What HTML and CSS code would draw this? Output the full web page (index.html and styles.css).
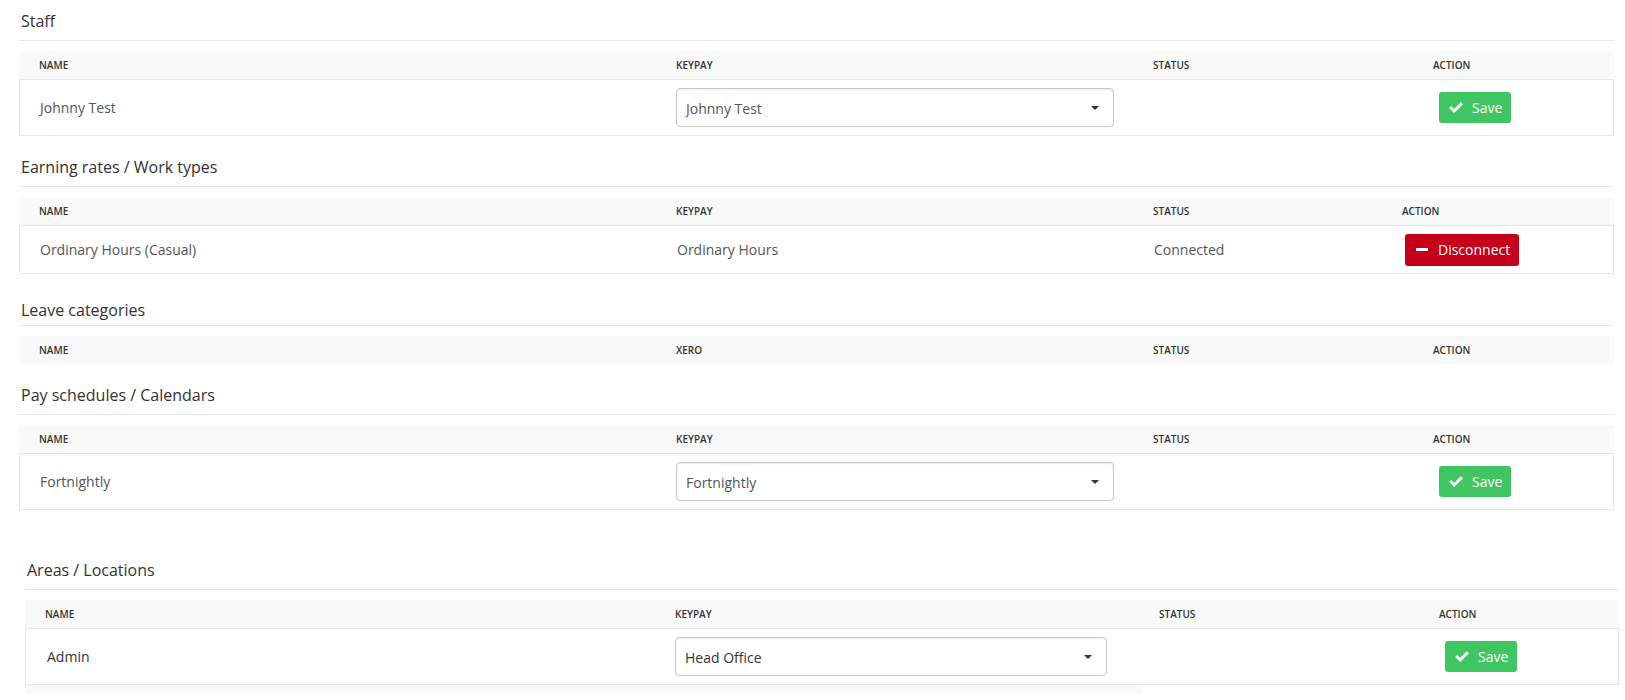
FILE: index.html
```html
<!DOCTYPE html>
<html lang="en">
<head>
<meta charset="UTF-8">
<meta name="viewport" content="width=device-width, initial-scale=1.0">
<title>KeyPay Mapping</title>
<link rel="stylesheet" href="styles.css">
</head>
<body>

<div class="section">
    <h2 class="section-title">Staff</h2>
    <div class="map-table">
        <div class="map-head">
            <div class="cell">NAME</div>
            <div class="cell">KEYPAY</div>
            <div class="cell">STATUS</div>
            <div class="cell">ACTION</div>
        </div>
        <div class="map-row">
            <div class="cell">Johnny Test</div>
            <div class="cell">
                <div class="select-wrap">
                    <select class="select"><option>Johnny Test</option></select>
                </div>
            </div>
            <div class="cell"></div>
            <div class="cell">
                <button class="btn btn-save">
                    <svg class="icon-check" viewBox="0 0 15 12"><polygon points="0,6.6 2.3,4.3 5.5,7.5 12.7,0.3 15,2.6 5.5,12"/></svg>
                    Save
                </button>
            </div>
        </div>
    </div>
</div>

<div class="section">
    <h2 class="section-title">Earning rates / Work types</h2>
    <div class="map-table map-table-rates">
        <div class="map-head">
            <div class="cell">NAME</div>
            <div class="cell">KEYPAY</div>
            <div class="cell">STATUS</div>
            <div class="cell">ACTION</div>
        </div>
        <div class="map-row map-row-short">
            <div class="cell">Ordinary Hours (Casual)</div>
            <div class="cell">Ordinary Hours</div>
            <div class="cell">Connected</div>
            <div class="cell">
                <button class="btn btn-disconnect">
                    <span class="icon-minus"></span>
                    Disconnect
                </button>
            </div>
        </div>
    </div>
</div>

<div class="section section-leave">
    <h2 class="section-title">Leave categories</h2>
    <div class="map-table">
        <div class="map-head">
            <div class="cell">NAME</div>
            <div class="cell">XERO</div>
            <div class="cell">STATUS</div>
            <div class="cell">ACTION</div>
        </div>
    </div>
</div>

<div class="section section-pay">
    <h2 class="section-title">Pay schedules / Calendars</h2>
    <div class="map-table">
        <div class="map-head">
            <div class="cell">NAME</div>
            <div class="cell">KEYPAY</div>
            <div class="cell">STATUS</div>
            <div class="cell">ACTION</div>
        </div>
        <div class="map-row">
            <div class="cell">Fortnightly</div>
            <div class="cell">
                <div class="select-wrap">
                    <select class="select"><option>Fortnightly</option></select>
                </div>
            </div>
            <div class="cell"></div>
            <div class="cell">
                <button class="btn btn-save">
                    <svg class="icon-check" viewBox="0 0 15 12"><polygon points="0,6.6 2.3,4.3 5.5,7.5 12.7,0.3 15,2.6 5.5,12"/></svg>
                    Save
                </button>
            </div>
        </div>
    </div>
</div>

<div class="section section-areas">
    <h2 class="section-title">Areas / Locations</h2>
    <div class="map-table map-table-areas">
        <div class="map-head">
            <div class="cell">NAME</div>
            <div class="cell">KEYPAY</div>
            <div class="cell">STATUS</div>
            <div class="cell">ACTION</div>
        </div>
        <div class="map-row">
            <div class="cell">Admin</div>
            <div class="cell">
                <div class="select-wrap">
                    <select class="select"><option>Head Office</option></select>
                </div>
            </div>
            <div class="cell"></div>
            <div class="cell">
                <button class="btn btn-save">
                    <svg class="icon-check" viewBox="0 0 15 12"><polygon points="0,6.6 2.3,4.3 5.5,7.5 12.7,0.3 15,2.6 5.5,12"/></svg>
                    Save
                </button>
            </div>
        </div>
        <div class="map-foot"></div>
    </div>
</div>

</body>
</html>
```

FILE: styles.css
```css
/* Mapping page */
body {
    margin: 0;
    padding-top: 9px;
    font-family: "Open Sans", "Noto Sans", sans-serif;
    background-color: #fff;
    color: #555;
}
.section {
    margin: 19px 11px 0 19px;
}
.section:first-child {
    margin-top: 0;
}
.section-leave {
    margin-top: 24px;
}
.section-pay {
    margin-top: 19px;
}
.section-areas {
    margin: 48px 6px 0 25px;
}
.section-title {
    margin: 0;
    padding: 0 2px 7px;
    font-size: 16px;
    font-weight: 400;
    line-height: 24px;
    color: #333;
    border-bottom: 1px solid #e8e8e8;
}
.section-leave .section-title {
    padding-bottom: 3px;
}
.map-table {
    margin-top: 10px;
}
.map-head,
.map-row {
    display: grid;
    grid-template-columns: 639px 477px 280px 1fr;
    align-items: center;
}
.map-table-rates .map-head,
.map-table-rates .map-row {
    grid-template-columns: 639px 477px 249px 1fr;
}
.map-table-areas .map-head,
.map-table-areas .map-row {
    grid-template-columns: 630px 484px 280px 1fr;
}
.map-head {
    height: 28px;
    background-color: #f9f9f9;
    font-size: 10px;
    font-weight: 600;
    color: #333;
}
.map-row {
    height: 55px;
    border: 1px solid #e6e6e6;
    font-size: 14px;
}
.map-row-short {
    height: 47px;
}
.cell {
    padding-left: 18px;
}
.cell:first-child {
    padding-left: 20px;
}
.map-table-areas .cell {
    padding-left: 20px;
}
.map-table-areas .map-row {
    color: #333;
}
.map-table-areas .map-row .cell:first-child {
    padding-left: 21px;
}
.map-foot {
    width: 1118px;
    height: 9px;
    background-color: #f8f9fa;
}
.select-wrap {
    position: relative;
    width: 438px;
    margin-left: -1px;
}
.map-table-areas .select-wrap {
    width: 432px;
}
.select-wrap::after {
    content: "";
    position: absolute;
    right: 15px;
    top: 18px;
    border-top: 4px solid #333;
    border-left: 4px solid transparent;
    border-right: 4px solid transparent;
    pointer-events: none;
}
.select {
    appearance: none;
    -webkit-appearance: none;
    width: 100%;
    height: 39px;
    padding: 2px 9px 0;
    border: 1px solid #c8c8c8;
    border-radius: 4px;
    box-shadow: inset 0 1px 2px rgba(0, 0, 0, 0.07);
    background-color: #fff;
    font-family: inherit;
    font-size: 14px;
    color: #555;
}
.map-table-areas .select {
    color: #333;
}
.btn {
    display: inline-flex;
    align-items: center;
    gap: 9px;
    height: 31px;
    margin-left: 5px;
    border: none;
    border-radius: 3px;
    font-family: inherit;
    font-size: 14px;
    color: #fff;
    cursor: pointer;
}
.btn-save {
    padding: 0 9px 0 10px;
    background-color: #40c563;
}
.btn-save:hover {
    background-color: #38b458;
}
.btn-disconnect {
    margin-left: 2px;
    height: 32px;
    padding: 0 9px 0 11px;
    gap: 10px;
    background-color: #c6001b;
}
.icon-check {
    width: 14px;
    height: 11px;
    fill: #fff;
}
.icon-minus {
    display: inline-block;
    width: 12px;
    height: 3px;
    background-color: #fff;
}
```
